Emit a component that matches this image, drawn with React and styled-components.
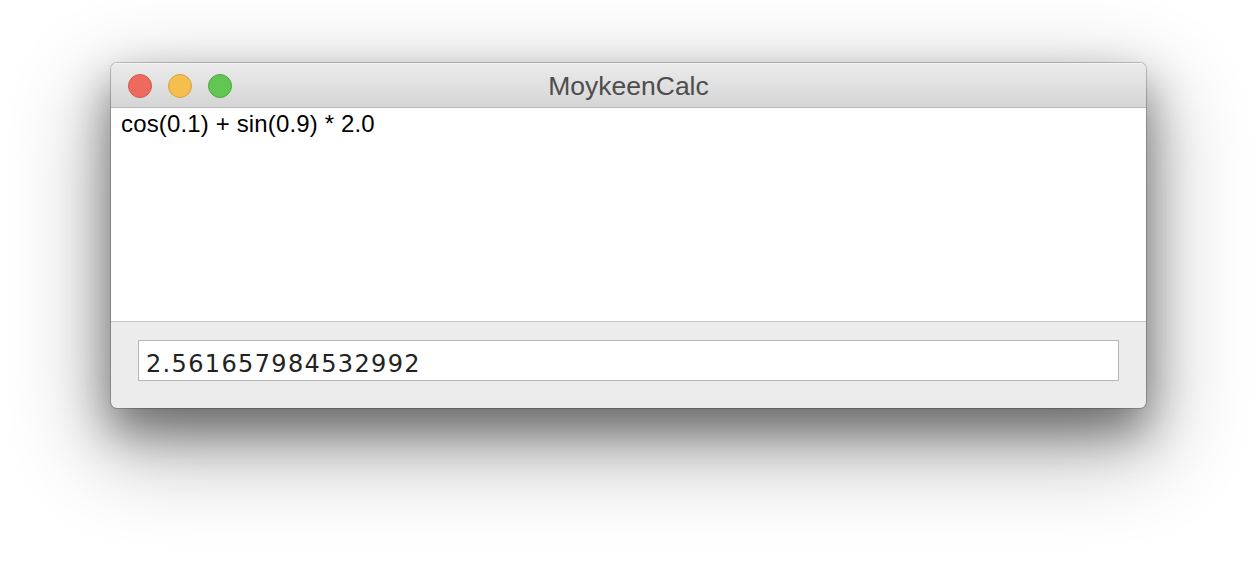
import React from "react";
import styled, { createGlobalStyle } from "styled-components";

const Global = createGlobalStyle`
  html, body { margin: 0; padding: 0; background: #ffffff; }
  body { font-family: "Liberation Sans", Arial, sans-serif; }
`;

const Page = styled.div`
  width: 1258px;
  height: 568px;
  box-sizing: border-box;
  padding: 63px 0 0 111px;
  overflow: hidden;
`;

const Window = styled.div`
  width: 1035px;
  height: 345px;
  border-radius: 6px;
  overflow: hidden;
  display: flex;
  flex-direction: column;
  background: #ececec;
  box-shadow: 0 0 0 1px rgba(0, 0, 0, 0.2), 0 22px 45px 0 rgba(0, 0, 0, 0.42),
    0 34px 90px 10px rgba(0, 0, 0, 0.32);
`;

const TitleBar = styled.div`
  height: 44px;
  flex: none;
  position: relative;
  display: flex;
  align-items: center;
  justify-content: center;
  background: linear-gradient(#ebebeb, #d5d5d5);
  border-bottom: 1px solid #b8b8b8;
  box-shadow: inset 0 1px 0 #f4f4f4;
`;

const Lights = styled.div`
  position: absolute;
  left: 17px;
  top: 11px;
  display: flex;
  gap: 16px;
`;

const Light = styled.span`
  width: 22px;
  height: 22px;
  border-radius: 50%;
  background: ${(p) => p.$bg};
  border: 1px solid ${(p) => p.$border};
`;

const Title = styled.div`
  font-family: "Liberation Sans", Arial, sans-serif;
  font-size: 26.5px;
  color: #4d4d4d;
  margin: 2px 0 0 0;
`;

const Editor = styled.div`
  height: 214px;
  flex: none;
  background: #ffffff;
  border-bottom: 1px solid #c6c6c6;
  box-sizing: border-box;
  padding: 2px 10px;
  font-family: "Liberation Sans", Arial, sans-serif;
  font-size: 24px;
  color: #000;
  line-height: 28px;
  letter-spacing: 0.15px;
`;

const Bottom = styled.div`
  flex: 1;
  padding: 18px 27px 0 27px;
`;

const ResultField = styled.div`
  height: 41px;
  box-sizing: border-box;
  border: 1px solid #b5b5b5;
  background: #ffffff;
  display: flex;
  align-items: center;
  padding: 6px 0 0 7px;
  font-family: "DejaVu Sans", sans-serif;
  font-size: 24px;
  letter-spacing: 1.35px;
  color: #222;
`;

export default function App() {
  return (
    <>
      <Global />
      <Page>
        <Window>
          <TitleBar>
            <Lights>
              <Light $bg="#ee6a5e" $border="#d2574b" />
              <Light $bg="#f5bf4f" $border="#d6a13c" />
              <Light $bg="#62c554" $border="#4ea941" />
            </Lights>
            <Title>MoykeenCalc</Title>
          </TitleBar>
          <Editor>cos(0.1) + sin(0.9) * 2.0</Editor>
          <Bottom>
            <ResultField>2.561657984532992</ResultField>
          </Bottom>
        </Window>
      </Page>
    </>
  );
}
